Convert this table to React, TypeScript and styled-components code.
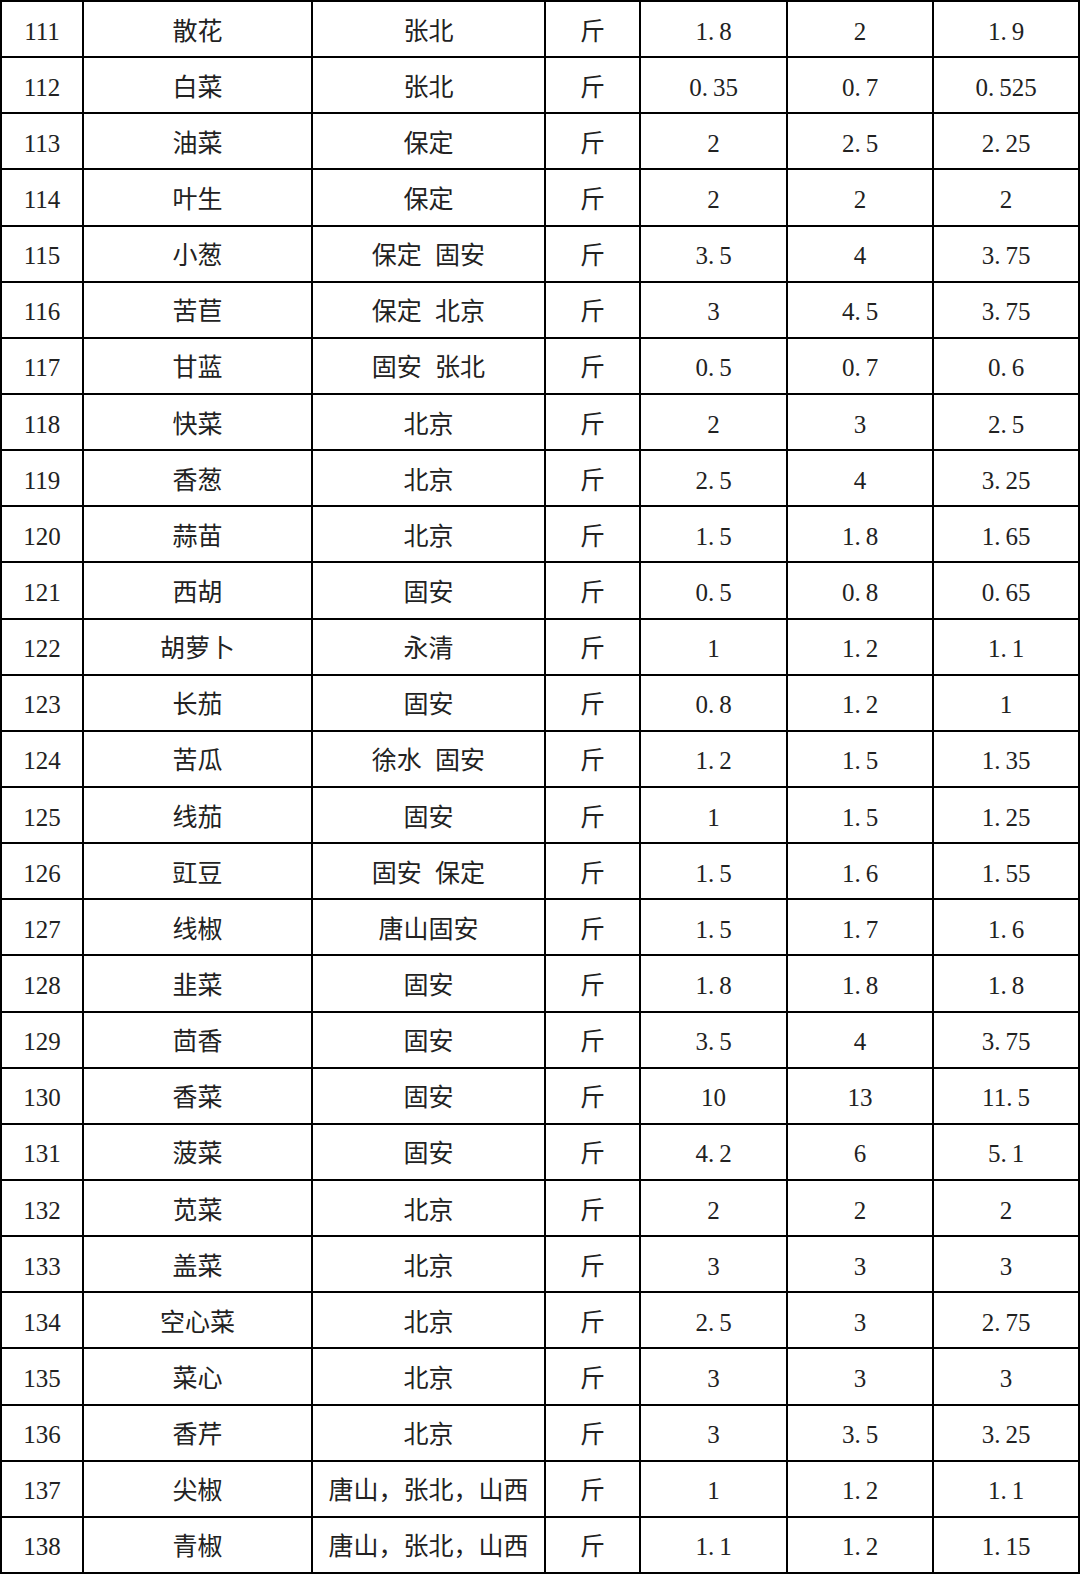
import React from 'react'
import styled, { createGlobalStyle } from 'styled-components'

const GlobalStyle = createGlobalStyle`
  html, body {
    margin: 0;
    padding: 0;
    background: #fff;
  }
`

const Table = styled.div`
  display: grid;
  grid-template-columns: 80px 227px 231px 93px 145px 144px 144px;
  grid-template-rows: repeat(28, 1fr);
  gap: 2px;
  padding: 2px;
  width: 1080px;
  height: 1574px;
  box-sizing: border-box;
  background: #000;
`

const Cell = styled.div`
  display: flex;
  align-items: center;
  justify-content: center;
  padding-top: 4px;
  background: #fff;
  color: #222;
  font-family: 'Liberation Serif', 'Noto Sans CJK SC', serif;
  font-size: 25px;
  line-height: 1;
  white-space: pre;
  word-spacing: 7px;
`

const Dot = styled.span`
  margin-right: 5px;
`

type Row = [number, string, string, string, string, string]

const rows: Row[] = [
  [111, '散花', '张北', '1.8', '2', '1.9'],
  [112, '白菜', '张北', '0.35', '0.7', '0.525'],
  [113, '油菜', '保定', '2', '2.5', '2.25'],
  [114, '叶生', '保定', '2', '2', '2'],
  [115, '小葱', '保定 固安', '3.5', '4', '3.75'],
  [116, '苦苣', '保定 北京', '3', '4.5', '3.75'],
  [117, '甘蓝', '固安 张北', '0.5', '0.7', '0.6'],
  [118, '快菜', '北京', '2', '3', '2.5'],
  [119, '香葱', '北京', '2.5', '4', '3.25'],
  [120, '蒜苗', '北京', '1.5', '1.8', '1.65'],
  [121, '西胡', '固安', '0.5', '0.8', '0.65'],
  [122, '胡萝卜', '永清', '1', '1.2', '1.1'],
  [123, '长茄', '固安', '0.8', '1.2', '1'],
  [124, '苦瓜', '徐水 固安', '1.2', '1.5', '1.35'],
  [125, '线茄', '固安', '1', '1.5', '1.25'],
  [126, '豇豆', '固安 保定', '1.5', '1.6', '1.55'],
  [127, '线椒', '唐山固安', '1.5', '1.7', '1.6'],
  [128, '韭菜', '固安', '1.8', '1.8', '1.8'],
  [129, '茴香', '固安', '3.5', '4', '3.75'],
  [130, '香菜', '固安', '10', '13', '11.5'],
  [131, '菠菜', '固安', '4.2', '6', '5.1'],
  [132, '苋菜', '北京', '2', '2', '2'],
  [133, '盖菜', '北京', '3', '3', '3'],
  [134, '空心菜', '北京', '2.5', '3', '2.75'],
  [135, '菜心', '北京', '3', '3', '3'],
  [136, '香芹', '北京', '3', '3.5', '3.25'],
  [137, '尖椒', '唐山，张北，山西', '1', '1.2', '1.1'],
  [138, '青椒', '唐山，张北，山西', '1.1', '1.2', '1.15'],
]

const Price = ({ value }: { value: string }) => {
  const [whole, frac] = value.split('.')
  if (frac === undefined) return <>{whole}</>
  return (
    <>
      {whole}
      <Dot>.</Dot>
      {frac}
    </>
  )
}

export default function App() {
  return (
    <>
      <GlobalStyle />
      <Table>
        {rows.map(([id, name, origin, low, high, avg]) => (
          <React.Fragment key={id}>
            <Cell>{id}</Cell>
            <Cell>{name}</Cell>
            <Cell>{origin}</Cell>
            <Cell>斤</Cell>
            <Cell>
              <Price value={low} />
            </Cell>
            <Cell>
              <Price value={high} />
            </Cell>
            <Cell>
              <Price value={avg} />
            </Cell>
          </React.Fragment>
        ))}
      </Table>
    </>
  )
}
